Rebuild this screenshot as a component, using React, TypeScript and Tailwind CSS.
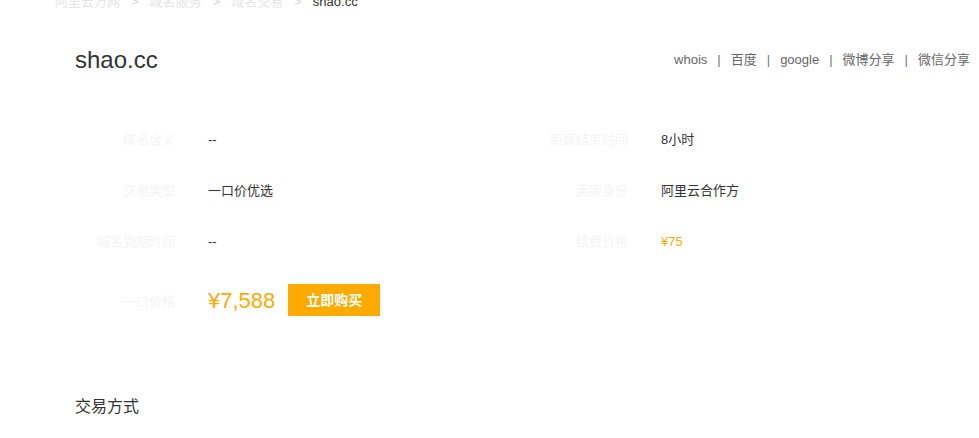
import React from "react";

const font = { fontFamily: '"Liberation Sans", "Noto Sans CJK SC", sans-serif' };

const crumbs = ["阿里云万网", "域名服务", "域名交易"];
const links = ["whois", "百度", "google", "微博分享", "微信分享"];

function InfoRow({ label, value, valueClass }: { label: string; value: React.ReactNode; valueClass?: string }) {
  return (
    <div className="flex items-center h-[51px]">
      <div className="w-[100px] text-right text-[13px] text-[#f4f4f4]">{label}</div>
      <div className={"ml-[33px] text-[13px] " + (valueClass || "text-[#333]")}>{value}</div>
    </div>
  );
}

export default function App() {
  return (
    <div className="w-[979px] h-[438px] overflow-hidden bg-white" style={font}>
      {/* breadcrumb, scrolled half out of view */}
      <div className="flex items-center mt-[-8px] pl-[55px] h-[20px] leading-[20px] text-[13px]">
        {crumbs.map((c) => (
          <React.Fragment key={c}>
            <span className="text-[#e6e6e6]">{c}</span>
            <span className="mx-[11px] text-[#d8d8d8]">&gt;</span>
          </React.Fragment>
        ))}
        <span className="text-[#333]">shao.cc</span>
      </div>

      <div className="pl-[75px] pr-[9px]">
        {/* header */}
        <div className="flex items-center justify-between h-[40px] mt-[28px]">
          <h1 className="text-[24px] leading-[30px] text-[#333]">shao.cc</h1>
          <div className="flex items-center text-[13px] text-[#666]">
            {links.map((l, i) => (
              <React.Fragment key={l}>
                {i > 0 && <span className="mx-[10px] text-[#777]">|</span>}
                <a className="cursor-pointer">{l}</a>
              </React.Fragment>
            ))}
          </div>
        </div>

        {/* details */}
        <div className="grid grid-cols-[453px_1fr] mt-[34px]">
          <InfoRow label="域名含义" value="--" />
          <InfoRow label="距离结束时间" value="8小时" />
          <InfoRow label="交易类型" value="一口价优选" />
          <InfoRow label="卖家身份" value="阿里云合作方" />
          <InfoRow label="域名到期时间" value="--" />
          <InfoRow label="续费价格" value="¥75" valueClass="text-[#ffaa00]" />
        </div>

        <div className="flex items-center mt-[17px] h-[32px]">
          <div className="w-[100px] text-right text-[13px] text-[#f4f4f4] pt-[4px]">一口价格</div>
          <div className="ml-[33px] text-[22px] text-[#ffaa00]">¥7,588</div>
          <button className="ml-[13px] w-[92px] h-[32px] bg-[#ffaa00] text-white text-[14px] font-bold">
            立即购买
          </button>
        </div>

        <div className="mt-[79px] text-[16px] leading-[24px] text-[#333]">交易方式</div>
      </div>
    </div>
  );
}
